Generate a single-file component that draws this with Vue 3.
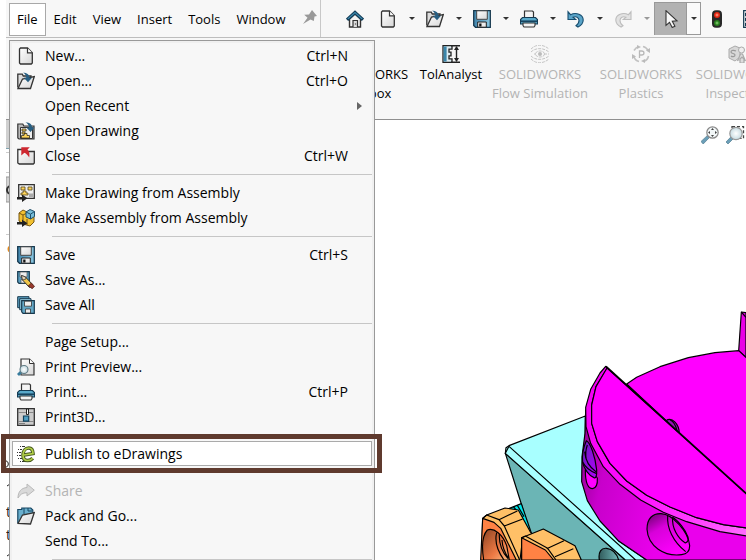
<script setup>
const menus = ['File', 'Edit', 'View', 'Insert', 'Tools', 'Window']

const quickTools = [
  { icon: 'new', label: 'New' },
  { icon: 'open', label: 'Open' },
  { icon: 'save', label: 'Save' },
  { icon: 'print', label: 'Print' },
  { icon: 'undo', label: 'Undo' },
  { icon: 'redo', label: 'Redo', disabled: true },
]

const addins = [
  { icon: 'toolbox', lines: ['SOLIDWORKS', 'Toolbox'] },
  { icon: 'tolanalyst', lines: ['TolAnalyst'] },
  { icon: 'flow', lines: ['SOLIDWORKS', 'Flow Simulation'], disabled: true },
  { icon: 'plastics', lines: ['SOLIDWORKS', 'Plastics'], disabled: true },
  { icon: 'inspection', lines: ['SOLIDWORKS', 'Inspection'], disabled: true },
]

const groups = [
  [
    { icon: 'new', label: 'New...', keys: 'Ctrl+N' },
    { icon: 'open', label: 'Open...', keys: 'Ctrl+O' },
    { label: 'Open Recent', submenu: true },
    { icon: 'opendrawing', label: 'Open Drawing' },
    { icon: 'close', label: 'Close', keys: 'Ctrl+W' },
  ],
  [
    { icon: 'makedrawing', label: 'Make Drawing from Assembly' },
    { icon: 'makeassembly', label: 'Make Assembly from Assembly' },
  ],
  [
    { icon: 'save', label: 'Save', keys: 'Ctrl+S' },
    { icon: 'saveas', label: 'Save As...' },
    { icon: 'saveall', label: 'Save All' },
  ],
  [
    { label: 'Page Setup...' },
    { icon: 'preview', label: 'Print Preview...' },
    { icon: 'print', label: 'Print...', keys: 'Ctrl+P' },
    { icon: 'print3d', label: 'Print3D...' },
  ],
  [{ icon: 'edrawings', label: 'Publish to eDrawings', active: true }],
  [
    { icon: 'share', label: 'Share', disabled: true },
    { icon: 'pack', label: 'Pack and Go...' },
    { label: 'Send To...' },
  ],
]
</script>

<template>
  <div class="app">
    <svg class="sprite" aria-hidden="true">
      <defs>
        <linearGradient id="paper" x1="0" y1="0" x2="1" y2="1">
          <stop offset="0" stop-color="#fff" /><stop offset="1" stop-color="#d6d6d6" />
        </linearGradient>
        <linearGradient id="blue" x1="0" y1="0" x2="1" y2="0">
          <stop offset="0" stop-color="#3f83ab" /><stop offset="1" stop-color="#8cc8e2" />
        </linearGradient>
        <radialGradient id="lens"><stop offset="0" stop-color="#fff" /><stop offset="1" stop-color="#c6dbe2" /></radialGradient>

        <symbol id="home" viewBox="0 0 18 18">
          <path d="M3.500 9v8h11V9L9 4z" fill="#f4f4f4" stroke="#333" stroke-width="1.400" />
          <path d="M7 17v-6.500h4.500V17M9.500 13.500v1" fill="#ddd" stroke="#333" stroke-width="1.200" />
          <path d="M.7 8.700 9 1l8.300 7.700-1.500 1.500L9 4 2.200 10.200z" fill="#3f8fb5" stroke="#143e59" stroke-width="1.100" />
        </symbol>
        <symbol id="new" viewBox="0 0 18 18">
          <path d="M3.500 1h7l4.800 4.800V16l-1 1H3.500l-1-1V2z" fill="url(#paper)" stroke="#333" stroke-width="1.300" />
          <path d="M10.500 1v4.800h4.800" fill="#fff" stroke="#333" stroke-width="1.200" />
        </symbol>
        <symbol id="open" viewBox="0 0 18 18">
          <path d="M.8 15.500V2.200h4.500l1 1.800H14v3" fill="#ddd" stroke="#333" stroke-width="1.300" />
          <path d="M1 16.500 5.500 7 17.300 4.500 13.500 16.500z" fill="url(#paper)" stroke="#333" stroke-width="1.300" />
          <path d="M6 .7c4 0 6.300 1.500 6.500 5H15l-4 4.500-4.200-4.500h2.500C9.200 3 8 1.800 6 .7z" fill="#285f82" />
        </symbol>
        <symbol id="save" viewBox="0 0 18 18">
          <path d="M.7.7h16.600v16.600H2.500L.7 15.500z" fill="url(#blue)" stroke="#17394e" stroke-width="1.300" />
          <path d="M3.700.8h10.600v8.500H3.700z" fill="url(#paper)" stroke="#444" />
          <path d="M4.700 12h8.600v5.200H4.700z" fill="#ececec" stroke="#222" /><path d="M6.200 13.500h2.300v3H6.200z" fill="#111" />
        </symbol>
        <symbol id="print" viewBox="0 0 18 18">
          <path d="M4.500 8V1h8l1 1v6" fill="#f4f4f4" stroke="#333" stroke-width="1.200" />
          <path d="M2.500 7.500h13l2 2v4.500H.5V9.500z" fill="#59a9ca" stroke="#153c54" stroke-width="1.200" />
          <path d="M.8 11.200h16.400" stroke="#143e59" stroke-width="1.500" />
          <path d="M3 13h12v2.500L14 17H4l-1-1.500z" fill="#f3f3f3" stroke="#333" stroke-width="1.100" />
        </symbol>
        <symbol id="undo" viewBox="0 0 18 18">
          <path d="M1 1.800v7.700h7.700L6 7.200c3-1.300 6 .2 6 3.300 0 2-1 3.800-3 5.200l2 1.300c3-1.500 5.200-4 5.200-7C16.200 4.600 9 2 3.600 4.700z" fill="#5aa4c8" stroke="#174e70" stroke-width="1.100" />
        </symbol>
        <symbol id="redo" viewBox="0 0 18 18">
          <path d="M17 1.800v7.700H9.300L12 7.200c-3-1.300-6 .2-6 3.300 0 2 1 3.800 3 5.200L7 17c-3-1.500-5.200-4-5.200-7C1.800 4.600 9 2 14.400 4.700z" fill="#e2e2e2" stroke="#bdbdbd" stroke-width="1.100" />
        </symbol>
        <symbol id="cursor" viewBox="0 0 18 18">
          <path d="M4 .7v14.600l3.500-3 2.700 5.200 2.700-1.300-2.600-5 4.700-.4z" fill="#f7f7f7" stroke="#333" stroke-width="1.100" />
        </symbol>
        <symbol id="traffic" viewBox="0 0 18 18">
          <rect x="4" y=".3" width="10" height="17.400" rx="4" fill="#282828" />
          <circle cx="9" cy="5" r="3" fill="#e42713" /><circle cx="9" cy="13" r="3" fill="#277d1e" />
          <path d="M9 3.500v3M7.500 5h3" stroke="#ff9c84" /><path d="M9 11.500v3M7.500 13h3" stroke="#84cf70" />
        </symbol>
        <symbol id="list" viewBox="0 0 18 18">
          <path d="M.7.700h17v16.600H.7z" fill="#fff" stroke="#173c52" stroke-width="1.300" />
          <path d="M2.500 3h4v3h-4zm0 5h4v3h-4zm0 5h4v3h-4z" fill="#63b5d4" stroke="#173c52" />
        </symbol>
        <symbol id="pin" viewBox="0 0 18 18">
          <path d="M12 2l5 6-2.500.5-.7 4.500-3.300-1.500L3 16l4.500-6.200-3.300-3L9 6.500z" fill="#999" />
        </symbol>
        <symbol id="opendrawing" viewBox="0 0 18 18">
          <path d="M.8 16V2h5l1 2H17v13H2z" fill="#bbb" stroke="#333" stroke-width="1.200" />
          <path d="M3.500 5.500h12v11h-12z" fill="#eee" stroke="#333" />
          <path d="M5 7h4v2H5zm0 3h3v2H5zm-.5 3.500H7v-2h3v2h2.500V16h-8z" fill="#ffd65c" stroke="#3a3320" stroke-width=".8" />
          <path d="M8.500.5C13 .5 15 2 15 5.500h2.500L13.500 10 9.300 5.500H12C12 3 10.500 1.500 8.500.5z" fill="#285f82" />
        </symbol>
        <symbol id="close" viewBox="0 0 18 18">
          <path d="M.8 16V2.500h5l1 2h10.500V16l-1 1h-14z" fill="url(#paper)" stroke="#333" stroke-width="1.300" />
          <path d="M4.300.2h8.500L10.500 2.500c1.700 1.700 2.400 4.500 1.700 8C11 8.200 9.400 6.700 7.400 5.700L4.300 8.500z" fill="#ce2830" />
        </symbol>
        <symbol id="makedrawing" viewBox="0 0 18 18">
          <path d="M1.700.700h15.600v13.600H1.700z" fill="#eee" stroke="#333" stroke-width="1.300" />
          <path d="M4 3h4v3H4zm7 0h4v3h-4zM4 11V9h2V7h3v2h2v2z" fill="#ffd65c" stroke="#53451b" stroke-width=".8" />
          <path d="M12 9.500h4v3.500h-4z" fill="#aaa" />
          <path d="M0 13h5v-2.500l5.500 3.700L5 18v-2.500H0z" fill="#222" />
        </symbol>
        <symbol id="makeassembly" viewBox="0 0 18 18">
          <path d="M2 4l4-3 4 2v4l7-1v7l-4 4-7-2-4-3z" fill="#f2c131" stroke="#765715" />
          <path d="M2 4l4 2v5M10 10v6M6 6l4-2" fill="none" stroke="#765715" />
          <path d="M9 3l4-2.500 4.500 2v5L13.500 10 9 8z" fill="#77bdd9" stroke="#204e69" />
          <path d="M9 3l4.500 2.200 4-2.700M13.500 5.200V10" fill="none" stroke="#204e69" />
          <path d="M0 13h5v-2.500l5.500 3.700L5 18v-2.500H0z" fill="#222" />
        </symbol>
        <symbol id="saveas" viewBox="0 0 18 18">
          <path d="M.7.700h11.600v11.600H2L.7 11z" fill="#5b9fc1" stroke="#17394e" stroke-width="1.200" />
          <path d="M3 1h7v5H3zM4 8.500h5v3.500H4z" fill="#eee" stroke="#555" stroke-width=".7" />
          <path d="M4.500 4.500l1 4.500 7 7.500 3-3L8.500 6z" fill="#f0c548" stroke="#333" />
          <path d="M4.500 4.500l1 4.500L9 8 8.500 6z" fill="#e9d2b3" stroke="#333" stroke-width=".7" />
          <path d="M11.300 15l3-3 3.200 3.200-2.200 2.500z" fill="#98392d" stroke="#4d2119" stroke-width=".8" />
        </symbol>
        <symbol id="saveall" viewBox="0 0 18 18">
          <path d="M.7.700H12v11H.7z" fill="#5b9fc1" stroke="#17394e" /><path d="M2.700 2.700H14v11H2.700z" fill="#9bd0e5" stroke="#17394e" />
          <path d="M4.700 4.700h12.600v12.600H6l-1.300-1.500z" fill="#64a8c7" stroke="#17394e" stroke-width="1.200" />
          <path d="M7.500 5.200h7v5h-7zM8.500 13h5v4h-5z" fill="#eee" stroke="#333" stroke-width=".8" />
        </symbol>
        <symbol id="preview" viewBox="0 0 18 18">
          <path d="M4 1h8.500L17 5.500V17H4z" fill="url(#paper)" stroke="#333" stroke-width="1.200" /><path d="M12.500 1v4.500H17" fill="#fff" stroke="#333" />
          <path d="M0 16l5-5 2 2-5 5z" fill="#397c9d" /><circle cx="7" cy="11.500" r="4" fill="url(#lens)" stroke="#617b84" stroke-width="1.100" />
        </symbol>
        <symbol id="print3d" viewBox="0 0 18 18">
          <path d="M.7.700h16.600v16.600H.7z" fill="#ccc" stroke="#333" stroke-width="1.300" /><path d="M1 4.500h16M1 13.500h16" stroke="#888" />
          <path d="M9.500 1h2v5.500h-2z" fill="#fff" stroke="#222" /><path d="M6.500 8h5.200v5.200H6.500z" fill="#4f9fc4" stroke="#14435d" stroke-width="1.200" />
          <path d="M2.500 15.500h5" stroke="#333" stroke-dasharray="1 1" />
        </symbol>
        <symbol id="edrawings" viewBox="0 0 18 18">
          <path d="M3 1.500h5M1 4.500h4M0 7.500h4M0 10.500h4M1 13.500h4M3 16.500h5" stroke="#333" stroke-dasharray="1 1 3 0" />
          <path d="M7 10l9-1.500C15.800 4.800 14.200 3 11.800 3 8.300 3 6 6.300 6 10.200c0 3.300 1.800 5.300 4.600 5.300 2 0 3.800-.8 5.100-2.300" fill="none" stroke="#46581e" stroke-width="3.600" />
          <path d="M7 10l9-1.500C15.800 4.800 14.200 3 11.800 3 8.300 3 6 6.300 6 10.200c0 3.300 1.800 5.300 4.600 5.300 2 0 3.800-.8 5.100-2.300" fill="none" stroke="#b3d048" stroke-width="1.700" />
        </symbol>
        <symbol id="share" viewBox="0 0 18 18">
          <path d="M10 2l7.300 6.200L10 14v-3.300c-4.500 0-7 1.800-9 5.300 0-6 3-10 9-10.500z" fill="#d9d9d9" stroke="#b9b9b9" />
        </symbol>
        <symbol id="pack" viewBox="0 0 18 18">
          <path d="M.8 16V2.500h4V1h9l2 2v4" fill="#69afcd" stroke="#174663" stroke-width="1.200" /><path d="M7 1v6M11 1v3h4" fill="none" stroke="#174663" />
          <path d="M1 16.500 5.500 8 17.300 5.500 13.500 17z" fill="url(#paper)" stroke="#333" stroke-width="1.300" />
        </symbol>
        <symbol id="toolbox" viewBox="0 0 18 18"><path d="M1 6h14v10H1zM5 6V3h6v3" fill="#ccc" stroke="#333" /></symbol>
        <symbol id="tolanalyst" viewBox="0 0 18 18">
          <path d="M1 .7h9v3.500H7v3H9v3.600H7v3h3v3.500H1z" fill="#dcecf2" stroke="#222" stroke-width="1.300" /><path d="M1.600 1.500h3v15h-3z" fill="#3b86aa" />
          <path d="M9 .7h9M9 17.300h9M14.500 2.500v13" stroke="#222" stroke-width="1.400" /><path d="M12 5l2.500-4L17 5zm0 8 2.500 4 2.500-4z" fill="#222" />
        </symbol>
        <symbol id="flow" viewBox="0 0 18 18">
          <g fill="none" stroke="#c4c4c4" stroke-dasharray="3 1"><path d="M0 4c5-5 12-5 18 0M0 7c5-5 13-4 18 0M0 11c5 5 13 4 18 0M0 14c5 5 12 5 18 0M3 9h2M13 9h5" /><ellipse cx="9" cy="9" rx="4.500" ry="3" /></g>
          <circle cx="9" cy="9" r="2" fill="#bbb" />
        </symbol>
        <symbol id="plastics" viewBox="0 0 18 18">
          <path d="M2 5.500C3.500 3 5 2 7 1.500M11 1.500c2.500.5 4 2 5 4M16.500 11c-.5 3-2.300 4.500-4.800 5.500M7 16.500c-3-.8-4.700-2.800-5.200-5.500" fill="none" stroke="#c2c2c2" stroke-width="1.600" />
          <path d="M5 0l4 2-4 2zM18 3v5l-4-2.500zM13 18l-4-2 4-2zM0 14V9l4 2.500z" fill="#bbb" />
          <path d="M7.500 13V6h2.200c3 0 3 4 0 4H7.500" fill="none" stroke="#b8b8b8" stroke-width="1.300" />
        </symbol>
        <symbol id="inspection" viewBox="0 0 18 18">
          <path d="M1 4l6-3 5 2v9l-5 4-6-3z" fill="#d8d8d8" stroke="#aaa" /><path d="M8 6C6 5 3 5 3 7s4 1 4 3-3 2-4 1" fill="none" stroke="#999" stroke-width="1.200" />
          <circle cx="13.500" cy="5" r="3" fill="#eee" stroke="#aaa" /><path d="M9.500 16l3-7h2l3 7M12 14l2-2 2 2v4h-4z" fill="#ddd" stroke="#aaa" stroke-width="1.200" />
        </symbol>
        <symbol id="zoomfit" viewBox="0 0 18 18">
          <path d="M0 15.500l6.200-5.800 2 2.100L2.200 18z" fill="#6b9fb8" stroke="#527c92" stroke-width=".7" /><circle cx="11.500" cy="6.500" r="5.700" fill="#f2f7f8" stroke="#888" stroke-width="1.200" />
          <path d="M11.500 2l1.500 2h-3zM11.500 11l1.500-2h-3zM7 6.500l2-1.500v3zM16 6.500l-2-1.500v3z" fill="#444" />
        </symbol>
        <symbol id="zoomarea" viewBox="0 0 20 20">
          <path d="M7 1.700h11.500v11.600H7z" fill="none" stroke="#444" stroke-width="1.300" stroke-dasharray="3 2" />
          <path d="M1 17l5.500-5.700 2 2.200L3 19z" fill="#6b9fb8" stroke="#527c92" stroke-width=".7" /><circle cx="11" cy="8.500" r="6.200" fill="url(#lens)" stroke="#999" stroke-width="1.200" />
        </symbol>
      </defs>
    </svg>

    <header class="topbar">
      <nav class="menubar" aria-label="Main menu">
        <button v-for="(m, i) in menus" :key="m" type="button" class="menu-button" :class="{ open: i === 0 }">{{ m }}</button>
        <button type="button" class="pin" aria-label="Pin menu"><svg class="icon"><use href="#pin" /></svg></button>
      </nav>
      <div class="quick">
        <button type="button" class="tool home" aria-label="Home"><svg class="icon"><use href="#home" /></svg></button>
        <div v-for="t in quickTools" :key="t.icon" class="split">
          <button type="button" class="tool" :disabled="t.disabled" :aria-label="t.label"><svg class="icon"><use :href="'#' + t.icon" /></svg></button>
          <button type="button" class="caret" :disabled="t.disabled" :aria-label="t.label + ' options'"></button>
        </div>
        <div class="split select">
          <button type="button" class="tool" aria-label="Select"><svg class="icon"><use href="#cursor" /></svg></button>
          <button type="button" class="caret" aria-label="Select options"></button>
        </div>
        <button type="button" class="tool rebuild" aria-label="Rebuild"><svg class="icon"><use href="#traffic" /></svg></button>
        <button type="button" class="tool props" aria-label="File properties"><svg class="icon"><use href="#list" /></svg></button>
      </div>
    </header>

    <section class="ribbon" aria-label="Add-ins">
      <button v-for="a in addins" :key="a.icon" type="button" class="addin" :disabled="a.disabled">
        <svg class="icon"><use :href="'#' + a.icon" /></svg>
        <span v-for="l in a.lines" :key="l">{{ l }}</span>
      </button>
    </section>

    <main class="workspace">
      <svg class="tree" viewBox="0 0 12 440" aria-hidden="true">
        <path d="M0 0h12v28H0z" fill="#d0d0d0" /><path d="M0 28.500h12" stroke="#7fa3b0" /><path d="M0 32.500h12M0 52.500h12M0 114.500h12" stroke="#ccc" />
        <path d="M0 57h12v25H0z" fill="#d4d4d4" stroke="#999" /><circle cx="5" cy="70" r="4" fill="none" stroke="#333" stroke-width="2" />
        <circle cx="5" cy="129" r="3.500" fill="#e38a1c" />
        <g font-family="Open Sans, sans-serif" font-size="14" fill="#222"><text x="0" y="397">t</text><text x="0" y="420">t</text></g>
        <path d="M0 341c3 0 3 6 0 6M1 366l3-2M1 436l3-2" fill="none" stroke="#222" />
      </svg>
      <div class="view">
        <div class="hud">
          <button type="button" class="hud-button" aria-label="Zoom to fit"><svg class="icon"><use href="#zoomfit" /></svg></button>
          <button type="button" class="hud-button" aria-label="Zoom to area"><svg class="icon big"><use href="#zoomarea" /></svg></button>
        </div>
        <svg class="model" viewBox="0 0 828 780" role="img" aria-label="Assembly model">
          <defs>
            <linearGradient id="side" gradientUnits="userSpaceOnUse" x1="335" y1="500" x2="600" y2="560">
              <stop offset="0" stop-color="#9e00a0" /><stop offset=".25" stop-color="#c800cb" /><stop offset="1" stop-color="#ea00ec" />
            </linearGradient>
            <linearGradient id="rim" gradientUnits="userSpaceOnUse" x1="360" y1="300" x2="828" y2="690">
              <stop offset="0" stop-color="#f500f5" /><stop offset=".5" stop-color="#ff10ff" /><stop offset="1" stop-color="#ff68ff" />
            </linearGradient>
            <linearGradient id="bore" x1="0" y1="0" x2=".6" y2="1">
              <stop offset="0" stop-color="#650068" /><stop offset=".4" stop-color="#d800da" /><stop offset="1" stop-color="#ff00ff" />
            </linearGradient>
            <linearGradient id="violet" x1="0" y1="0" x2="1" y2="1"><stop offset="0" stop-color="#6520b8" /><stop offset="1" stop-color="#b000ff" /></linearGradient>
            <linearGradient id="copper" x1="0" y1="0" x2="1" y2="1"><stop offset="0" stop-color="#8c4424" /><stop offset=".6" stop-color="#ec7843" /><stop offset="1" stop-color="#ffbd83" /></linearGradient>
            <linearGradient id="tealbore" x1="0" y1="0" x2="1" y2="0"><stop offset="0" stop-color="#315b5c" /><stop offset="1" stop-color="#72baba" /></linearGradient>
          </defs>
          <g stroke="#000" stroke-width="3.500" stroke-linejoin="round">
            <path d="M108 443L117 437 346 348V540L360 605 395 665 445 722 530 780H490L106 460z" fill="#a8ffff" />
            <path d="M106 460L466 780H190L180 700 154 612z" fill="#6bb5b5" />
            <path d="M106 460L117 439 497 780H466z" fill="#a8ffff" />
            <path d="M388 780c-4-24 6-37 22-35 17 2 30 15 36 35z" fill="url(#tealbore)" />

            <path d="M118 625l36-14 30 88-15 10z" fill="#00e5e8" />
            <path d="M130 620l26 30 18 50M142 616l20 34" fill="none" />
            <path d="M35 780L38 655 50 645 105 624 145 630 180 694 188 705 158 715 150 780z" fill="#ffc067" />
            <path d="M32 780L38 655 72 667 92 685 139 780z" fill="#ff8244" />
            <path d="M38 655l12-10 37 14 16 19 46 102M87 659l55-26M103 678l55-21" fill="none" />
            <path d="M41 780C35 742 37 706 52 690c20-8 47 14 58 47l8 43z" fill="url(#copper)" />
            <path d="M80 698c-6 24 2 54 22 82M88 703c-1 23 7 52 26 73M96 720c1 18 8 38 20 55" fill="none" />
            <path d="M155 780V713L220 687 315 737 334 780z" fill="#ffc067" />
            <path d="M155 780V713l71 37 25 30z" fill="#ff8244" />
            <path d="M155 713l11-5 67 37 25 35M230 746l52-24M255 770l55-24" fill="none" />

            <path d="M806 152L814 36l14 2v134z" fill="#e900e7" /><path d="M814 36l14 16" fill="none" />
            <path d="M470 252L500 232 570 200 655 173 735 158 806 152 832 176V590z" fill="#f0f" />
            <path d="M588 362c18-12 39 9 40 38z" fill="#9410b8" /><path d="M600 359c10 4 18 20 21 34" fill="none" />
            <path d="M347 330L345 400 336 470 335 545 352 602 390 663 445 722 530 780H840V700L400 480z" fill="url(#side)" />
            <path d="M407 199L390 219 362 268 347 322 348 380 362 430 400 500 450 553 512 600 580 637 650 665 750 695 832 708V684L760 674 680 653 600 621 530 586 470 543 420 490 382 425 365 370V315L378 260 412 204z" fill="url(#rim)" />
            <path d="M411 204L378 260 365 315V370L382 425 420 490 470 543 530 586 600 621 680 653 760 674 832 684V584z" fill="#f0f" />
            <path d="M408 199L832 584" fill="none" stroke-width="5" />

            <path d="M346 510c0 35 8 56 22 56 11-2 15-15 14-32l-12-15z" fill="#f0f" />
            <path d="M349 422c12 5 27 48 31 88 1 19-3 26-8 23-14-5-30-27-34-45-2-20 1-44 11-66z" fill="url(#violet)" />
            <path d="M338 486c8 16 21 27 42 35M344 455c2 24 13 46 34 60M352 435c-5 14-6 30-3 44" fill="none" />
            <path d="M531 688c0-33 17-48 42-47 35 2 82 53 86 96 0 15-8 25-24 27-52 7-101-25-104-76z" fill="url(#bore)" />
            <path d="M593 647c-3 37 16 78 54 108M608 652c-3 31 15 63 38 77 8-2 11-11 7-20-7-19-28-47-45-57z" fill="none" />
          </g>
        </svg>
      </div>
    </main>

    <div class="file-menu" role="menu" aria-label="File">
      <div v-for="(g, gi) in groups" :key="gi" class="group" role="group">
        <button v-for="it in g" :key="it.label" type="button" role="menuitem" class="item" :class="{ active: it.active }" :disabled="it.disabled">
          <svg class="icon"><use v-if="it.icon" :href="'#' + it.icon" /></svg>
          <span class="label">{{ it.label }}</span>
          <span v-if="it.keys" class="keys">{{ it.keys }}</span>
          <span v-if="it.submenu" class="arrow"></span>
        </button>
      </div>
    </div>
  </div>
</template>

<style>
body {
  margin: 0;
  background: #fff;
}
</style>

<style scoped>
.app {
  position: relative;
  display: flex;
  flex-direction: column;
  height: 100vh;
  overflow: hidden;
  padding-left: 6px;
  box-sizing: border-box;
  font-family: 'Open Sans', 'Noto Sans', sans-serif;
  font-size: 14px;
  line-height: 19px;
  color: #000;
}
.sprite {
  position: absolute;
  width: 0;
  height: 0;
}
button {
  margin: 0;
  padding: 0;
  border: 0;
  background: none;
  font: inherit;
  color: inherit;
}
.icon {
  display: block;
  flex: none;
  width: 18px;
  height: 18px;
}
.topbar {
  display: flex;
  flex: none;
  height: 37px;
  background: #f7f7f7;
  border-bottom: 1px solid #bdbdbd;
}
.menubar {
  display: flex;
  flex: none;
  width: 315px;
  box-sizing: border-box;
  padding: 3px 0 1px 3px;
  border-right: 1px solid #c8c8c8;
  font-size: 13px;
}
.menu-button {
  padding: 0 8px;
}
.menu-button.open {
  padding: 0 7px;
  border: 1px solid #a8a8a8;
  background: #fff;
}
.pin {
  display: flex;
  padding: 5px 0 0 6px;
}
.quick {
  display: flex;
  flex: 1;
  min-width: 0;
  overflow: hidden;
  align-items: center;
}
.tool {
  display: flex;
  flex: none;
  align-items: center;
  justify-content: center;
  width: 28px;
  height: 32px;
}
.home {
  margin: 0 5px 0 20px;
}
.split {
  display: flex;
  flex: none;
}
.caret {
  display: flex;
  align-items: center;
  justify-content: center;
  width: 19px;
}
.caret::before {
  content: '';
  border: 3px solid transparent;
  border-top-color: #333;
  border-bottom: 0;
}
.caret:disabled::before {
  border-top-color: #999;
}
.select {
  height: 33px;
  margin-left: -2px;
  box-sizing: border-box;
  border: 1px solid #999;
}
.select .tool {
  width: 31px;
  background: #b2b2b2;
}
.select .caret {
  width: 14px;
  border-left: 1px solid #999;
  background: #fafafa;
}
.rebuild {
  margin: 0 12px 0 2px;
}
.props {
  width: 18px;
}
.ribbon {
  display: grid;
  flex: none;
  grid-template-columns: 86px 62px 96px 86px 86px;
  column-gap: 10px;
  height: 81px;
  padding-left: 318px;
  background: #f7f7f7;
  border-bottom: 1px solid #8f8f8f;
  overflow: hidden;
  font-size: 13px;
}
.addin {
  display: flex;
  flex-direction: column;
  align-items: center;
  padding-top: 7px;
  white-space: nowrap;
}
.addin .icon {
  margin-bottom: 2px;
}
.addin:disabled {
  color: #b4b4b4;
}
.workspace {
  display: flex;
  flex: 1;
  min-height: 0;
}
.tree {
  flex: none;
  width: 12px;
  height: 440px;
}
.view {
  display: flex;
  flex: 1;
  flex-direction: column;
  align-items: flex-end;
  justify-content: space-between;
}
.hud {
  display: flex;
  gap: 6px;
  align-items: center;
  padding: 5px 1px 0 0;
}
.icon.big {
  width: 20px;
  height: 20px;
}
.model {
  display: block;
  flex: none;
  width: 276px;
  height: 260px;
}
.file-menu {
  position: absolute;
  top: 40px;
  left: 9px;
  width: 366px;
  box-sizing: border-box;
  padding: 2px;
  border: 1px solid #999;
  background: #f7f7f7;
  box-shadow: inset 0 0 0 2px #f0f0f0;
}
.group::after {
  content: '';
  display: block;
  height: 1px;
  margin: 6px 0 5px 40px;
  background: #c6c6c6;
}
.item {
  position: relative;
  display: flex;
  align-items: center;
  gap: 10px;
  width: 100%;
  height: 25px;
  padding: 0 24px 0 5px;
  text-align: left;
}
.item:disabled {
  color: #b4b4b4;
}
.label {
  flex: 1;
  white-space: nowrap;
}
.arrow {
  margin-right: -14px;
  border: 4px solid transparent;
  border-left: 5px solid #666;
  border-right: 0;
}
.item.active {
  background: #fff;
  box-shadow: inset 0 0 0 1px #aaa;
}
.item.active::after {
  content: '';
  position: absolute;
  inset: -7px -10px -7px -11px;
  border: 5px solid #5f3a2e;
}
</style>
